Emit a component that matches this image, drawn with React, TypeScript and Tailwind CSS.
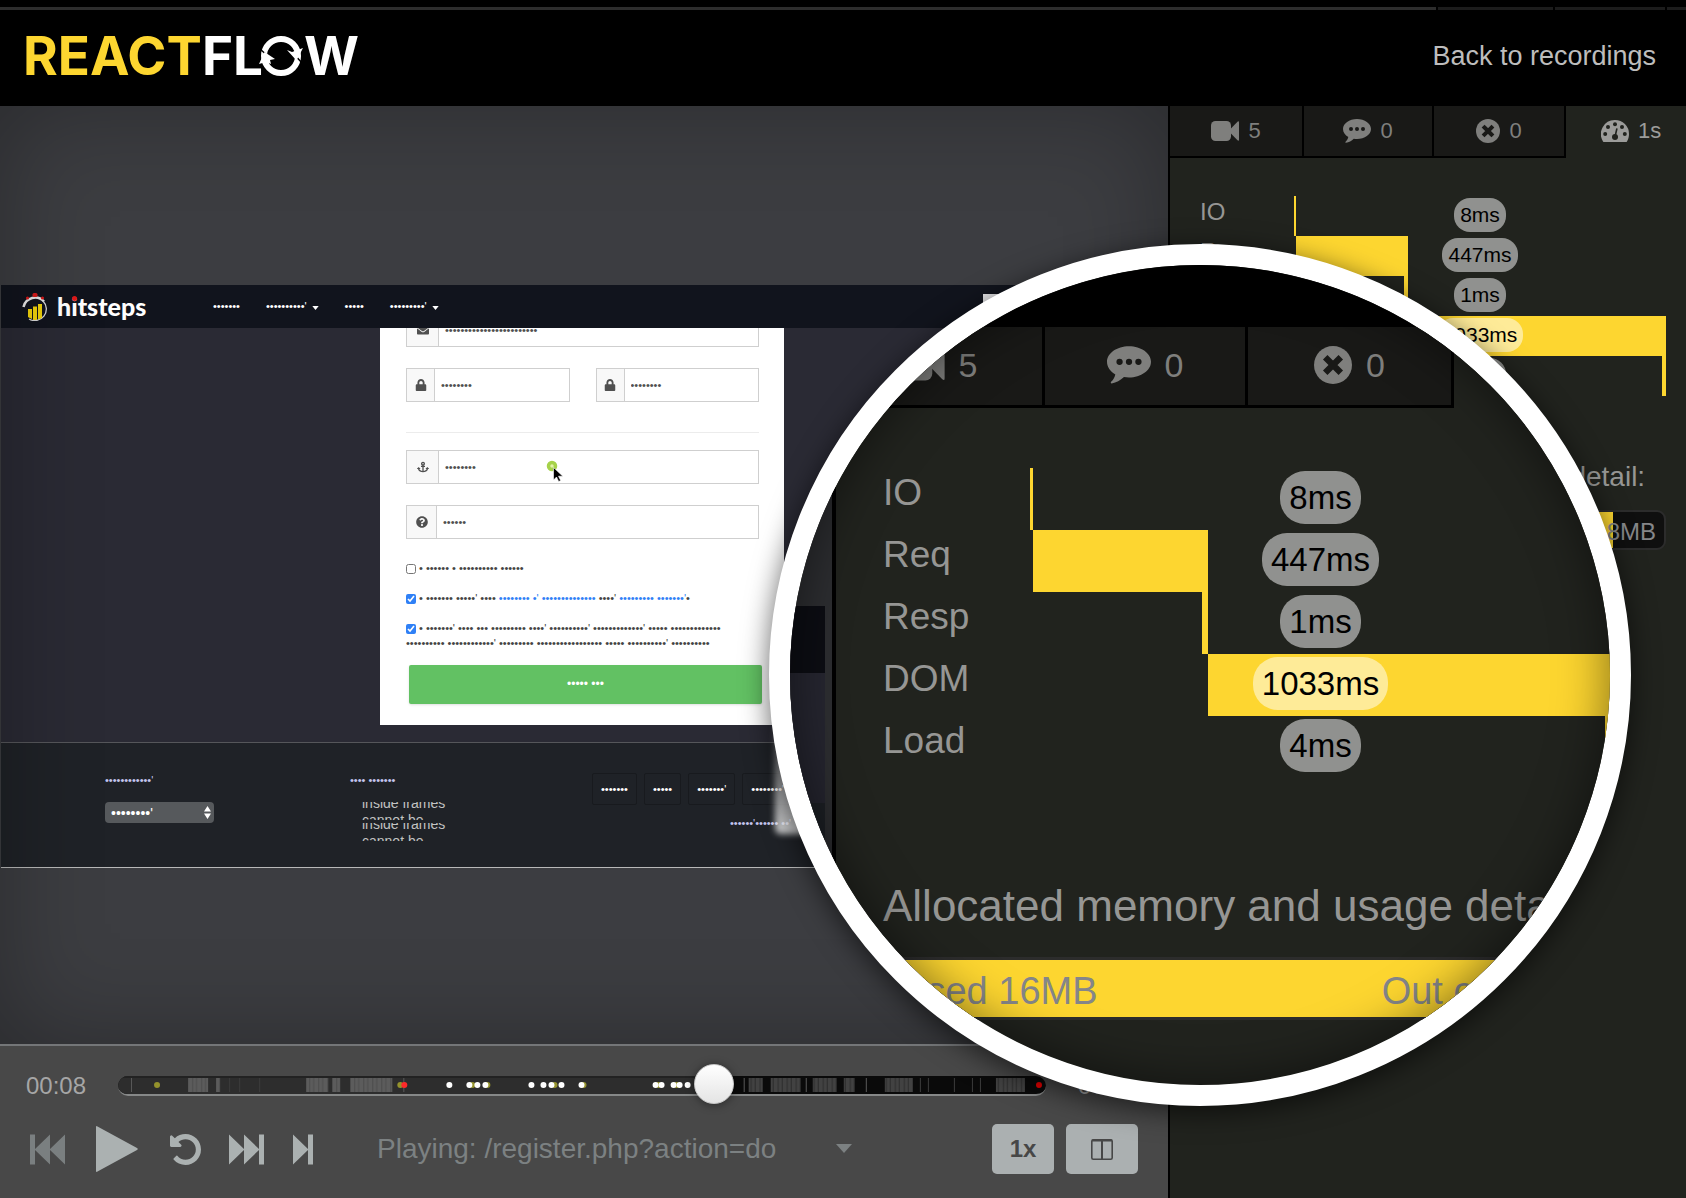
import type { ReactNode } from 'react';
import clsx from 'clsx';
import { FaAnchor, FaEnvelope, FaLock, FaQuestionCircle } from 'react-icons/fa';

const timings = [
  { label: 'IO', value: '8ms', start: 0, size: 2 },
  { label: 'Req', value: '447ms', start: 2, size: 112 },
  { label: 'Resp', value: '1ms', start: 110, size: 4 },
  { label: 'DOM', value: '1033ms', start: 114, size: 258 },
  { label: 'Load', value: '4ms', start: 368, size: 4 },
];

const timelineWidth = 372;

// busy stretches of the recording, [from, to] along the track
const playedBursts = [[70, 90], [98, 102], [188, 210], [214, 222], [232, 274]];
const upcomingBursts = [[630, 644], [652, 682], [694, 718], [725, 736], [766, 794], [877, 906]];
const ticks = [13, 285, 625, 687, 747];
const faintTicks = [111, 121, 141, 801, 809, 835, 853, 861];
const clicks = [331, 351, 359, 367, 413, 425, 433, 443, 463, 537, 543, 555, 561, 569];
const moves = [39, 282, 354, 369, 436, 465, 540, 558];

const dots = (n: number) => '•'.repeat(n);

function VideoIcon({ className }: { className: string }) {
  return (
    <svg viewBox="0 0 28 22" className={className} fill="currentColor" aria-hidden="true">
      <rect x="0" y="1" width="20" height="20" rx="4.500" />
      <path d="M17.500 11 26.500 1.700Q28 .5 28 2.500V19.500Q28 21.500 26.500 20.300Z" />
    </svg>
  );
}

function CommentIcon({ className }: { className: string }) {
  return (
    <svg viewBox="0 0 28 24" className={className} aria-hidden="true">
      <path
        fill="currentColor"
        d="M14 0C21.700 0 28 4.500 28 10s-6.300 10-14 10c-1.100 0-2.200-.1-3.200-.3-2.300 2.200-4.900 3.700-7.800 4-.6 0-.8-.6-.4-1 1.200-1.100 2.200-2.500 2.700-4.700C2.100 16.200 0 13.300 0 10 0 4.500 6.300 0 14 0Z"
      />
      <g fill="#191917">
        <circle cx="8" cy="10" r="2" />
        <circle cx="14" cy="10" r="2" />
        <circle cx="20" cy="10" r="2" />
      </g>
    </svg>
  );
}

function ErrorIcon({ className }: { className: string }) {
  return (
    <svg viewBox="0 0 24 24" className={className} aria-hidden="true">
      <circle cx="12" cy="12" r="12" fill="currentColor" />
      <path d="M8.500 8.500l7 7M15.500 8.500l-7 7" stroke="#191917" strokeWidth="4" strokeLinecap="square" />
    </svg>
  );
}

function GaugeIcon({ className }: { className: string }) {
  return (
    <svg viewBox="0 0 28 22" className={className} aria-hidden="true">
      <path fill="currentColor" d="M14 0a14 14 0 0 1 14 14c0 2.700-.7 5.200-2 7.400-.3.400-.6.600-1 .6H3c-.4 0-.7-.2-1-.6A14 14 0 0 1 14 0Z" />
      <g fill="#21231e">
        <circle cx="4.200" cy="14" r="2" />
        <circle cx="7" cy="7" r="2" />
        <circle cx="14" cy="4.200" r="2" />
        <circle cx="21" cy="7" r="2" />
        <circle cx="23.800" cy="14" r="2" />
        <circle cx="14" cy="17" r="3" />
      </g>
      <path d="M14.200 16 15.800 9" stroke="#21231e" strokeWidth="1.600" strokeLinecap="round" />
    </svg>
  );
}

function Tab({ large, active, className, children }: { large?: boolean; active?: boolean; className: string; children: ReactNode }) {
  return (
    <button
      type="button"
      className={clsx(
        'flex shrink-0 items-center border-black leading-none',
        large ? 'h-[81px] gap-[14px] pb-[2px] text-[34px]' : 'h-[52px] gap-[9px] text-[22px]',
        !active && (large ? 'border-r-3 border-b-3' : 'border-r-2 border-b-2'),
        active ? 'pb-[2px] text-[#9c9c9a]' : 'justify-center bg-[#191917] text-[#7f7f7d]',
        className,
      )}
    >
      {children}
    </button>
  );
}

function PerformancePanel({ large }: { large?: boolean }) {
  return (
    <div className={clsx('shrink-0 border-black bg-[#21231e]', large ? 'w-[840px] border-l-4' : 'w-[518px] border-l-2')}>
      <div className="flex">
        <Tab large={large} className={large ? 'w-[209px]' : 'w-[134px]'}>
          <VideoIcon className={large ? 'h-[34px] w-[44px]' : 'h-[22px] w-[28px]'} />5
        </Tab>
        <Tab large={large} className={large ? 'w-[203px]' : 'w-[130px]'}>
          <CommentIcon className={large ? 'h-[38px] w-[44px]' : 'h-[24px] w-[28px]'} />0
        </Tab>
        <Tab large={large} className={large ? 'w-[206px]' : 'w-[132px]'}>
          <ErrorIcon className={large ? 'size-[38px]' : 'size-[24px]'} />0
        </Tab>
        <Tab large={large} active className={large ? 'flex-1 pl-[55px]' : 'flex-1 pl-[35px]'}>
          <GaugeIcon className={large ? 'h-[34px] w-[44px]' : 'h-[22px] w-[28px]'} />1s
        </Tab>
      </div>

      <div className={large ? 'pt-[60px] pr-[61px] pl-[47px]' : 'pt-[38px] pr-[20px] pl-[30px]'}>
        <dl>
          {timings.map((t) => (
            <div key={t.label} className={clsx('flex', large ? 'h-[62px]' : 'h-[40px]')}>
              <dt className={clsx('flex shrink-0 items-center text-[#969694]', large ? 'w-[147px] pb-[12px] text-[37px]' : 'w-[94px] pb-[8px] text-[24px]')}>
                {t.label}
              </dt>
              <dd className="relative flex-1">
                <div
                  className="h-full bg-[#fdd630]"
                  style={{ marginLeft: `${(t.start / timelineWidth) * 100}%`, width: `${(t.size / timelineWidth) * 100}%` }}
                />
                <div className={clsx('absolute inset-0 flex justify-center', large ? 'pt-[3px]' : 'pt-[2px]')}>
                  <span
                    className={clsx(
                      'flex items-center bg-white/50 leading-none text-black',
                      large ? 'h-[53px] rounded-[25px] px-[9px] text-[33px]' : 'h-[34px] rounded-[16px] px-[6px] pb-px text-[21px]',
                    )}
                  >
                    {t.value}
                  </span>
                </div>
              </dd>
            </div>
          ))}
        </dl>

        <h2 className={clsx('whitespace-nowrap text-[#969694]', large ? 'mt-[97px] text-[44px] leading-[62px]' : 'mt-[61px] text-[28px] leading-[40px]')}>
          Allocated memory and usage detail:
        </h2>
        <div
          className={clsx(
            'relative overflow-hidden border-[#2c2c2c] bg-[#0f0f0f]',
            large ? 'mt-[20px] h-[63px] rounded-[14px] border-3' : 'mt-[13px] h-[40px] rounded-[9px] border-2',
          )}
        >
          <div className="h-full w-[89%] bg-[#fdd630]" />
          <div
            className={clsx(
              'absolute inset-0 flex items-center justify-between text-[#858689]',
              large ? 'px-[13px] pt-[6px] text-[38px]' : 'px-[8px] pt-[4px] text-[24px]',
            )}
          >
            <span>Used 16MB</span>
            <span>Out of 18MB</span>
          </div>
        </div>
      </div>
    </div>
  );
}

function Magnifier() {
  return (
    <>
      <div className="absolute top-[700px] right-[831px] h-[134px] w-[80px] rounded-md bg-linear-to-b from-white/20 to-white/80 blur-[3px]" />
      <div className="absolute top-[244px] right-[55px] size-[862px] overflow-hidden rounded-full border-21 border-white bg-[#21231e] shadow-[0_6px_28px_rgba(0,0,0,0.6)]">
        <div className="h-[62px] bg-black" />
        <div className="flex">
          <div className="flex w-[42px] shrink-0 flex-col bg-[#2c2d30] pr-[7px]">
            <div className="h-[279px]" />
            <div className="h-[67px] bg-[#0c0d13]" />
            <div className="h-[130px] bg-[#25252f]" />
            <div className="flex-1 bg-[#1d2025]" />
          </div>
          <PerformancePanel large />
        </div>
        <div className="absolute inset-0 rounded-full shadow-[inset_0_0_50px_rgba(0,0,0,0.5)]" />
      </div>
    </>
  );
}

function Logo() {
  return (
    <h1 aria-label="ReactFlow" className="flex items-center font-[Inter,sans-serif] text-[53px] leading-none font-bold">
      <span className="text-[#fdd630]">REACT</span>
      <span className="text-white">FL</span>
      <svg viewBox="0 0 46 42" className="-ml-[5px] h-[42px] w-[46px]" aria-hidden="true">
        <circle cx="23" cy="21" r="17" fill="none" stroke="#fff" strokeWidth="6" />
        <path d="M35 18 44 28M2 14l9 8" stroke="#000" strokeWidth="1.500" />
        <path d="M29 15l5 2 11-4-6.500 12.500z" fill="#fff" />
        <path d="M1 29 6.500 17 17 24l-5 1 1 4-5-2z" fill="#fff" />
      </svg>
      <span className="text-white">W</span>
    </h1>
  );
}

function Field({ label, value, icon, addon, className }: { label: string; value: string; icon: ReactNode; addon: string; className?: string }) {
  return (
    <label className={clsx('relative flex h-[34px] shrink-0 border border-[#cfcfcf] bg-white text-[#505050]', className)}>
      <span className={clsx('flex shrink-0 items-center justify-center border-r border-[#cfcfcf] bg-[#f8f8f8] text-[12px]', addon)}>{icon}</span>
      <input aria-label={label} defaultValue={value} className="w-full min-w-0 bg-transparent pl-[6px] text-[11px] outline-none" />
    </label>
  );
}

function Caret() {
  return (
    <svg viewBox="0 0 8 5" className="mt-[2px] h-[4px] w-[7px]" fill="currentColor" aria-hidden="true">
      <path d="M0 0h8L4 5z" />
    </svg>
  );
}

function HitstepsLogo() {
  return (
    <div className="flex items-center gap-[9px]">
      <svg viewBox="0 0 26 28" className="h-[28px] w-[26px]" aria-hidden="true">
        <path d="M1.500 14A12 12 0 0 1 22 8.500" fill="none" stroke="#e8e8e8" strokeWidth="2.500" />
        <path d="M21 8A11.500 11.500 0 0 1 7 26" fill="none" stroke="#d8d8d8" strokeWidth="1.300" />
        <path d="M6 16h4v10q-2.500-1-4-2zM11 13.500h4V27h-4zM16 11h4v14l-4 1.500z" fill="#f1d30b" />
        <rect x="10.500" y="0" width="5" height="4" rx="1.500" fill="#d51a1a" />
        <circle cx="5.500" cy="5" r="1.600" fill="#d51a1a" />
        <circle cx="20.500" cy="5" r="1.600" fill="#d51a1a" />
      </svg>
      <span className="relative font-[Lato,sans-serif] text-[25px] leading-none font-black text-white">
        hitsteps
        <span className="absolute top-[2px] left-[15px] size-[5px] rounded-full bg-[#e01818]" />
      </span>
    </div>
  );
}

function SignupForm() {
  return (
    <form className="mx-auto w-[404px] bg-white pr-[25px] pb-[21px] pl-[26px] text-[11px] leading-[15px] text-[#444]">
      <div className="flex h-[19px] flex-col justify-end overflow-hidden">
        <Field label="Email" value={dots(24)} icon={<FaEnvelope />} addon="w-[32px]" />
      </div>
      <div className="mt-[21px] grid grid-cols-2 gap-[26px]">
        <Field label="Password" value={dots(8)} icon={<FaLock />} addon="w-[28px]" />
        <Field label="Repeat password" value={dots(8)} icon={<FaLock />} addon="w-[28px]" />
      </div>
      <hr className="mt-[30px] border-[#ececec]" />
      <div className="relative mt-[17px]">
        <Field label="Website" value={dots(8)} icon={<FaAnchor />} addon="w-[32px]" />
        <svg viewBox="0 0 20 24" className="absolute top-[10px] left-[140px] h-[24px] w-[20px]" aria-hidden="true">
          <circle cx="6" cy="6" r="3.500" fill="#e3f2a8" stroke="#a6d24a" strokeWidth="3.500" />
          <path d="M7.500 7.500V20l3-3 2.200 4.500 2-1-2.200-4.300h4.300z" fill="#000" stroke="#fff" strokeWidth=".6" />
        </svg>
      </div>
      <Field label="Referrer" value={dots(6)} icon={<FaQuestionCircle />} addon="w-[30px]" className="mt-[21px]" />

      <label className="mt-[22px] flex items-center gap-[3px]">
        <input type="checkbox" className="size-[10px]" />
        <span>{`${dots(1)} ${dots(6)} ${dots(1)} ${dots(10)} ${dots(6)}`}</span>
      </label>
      <label className="mt-[15px] flex items-center gap-[3px]">
        <input type="checkbox" defaultChecked className="size-[10px] accent-[#2f80f6]" />
        <span>
          {`${dots(1)} ${dots(7)} ${dots(5)}' ${dots(4)} `}
          <a href="#terms" className="text-[#2f80f6]">{`${dots(8)} ${dots(1)}' ${dots(14)}`}</a>
          {` ${dots(4)}' `}
          <a href="#privacy" className="text-[#2f80f6]">{`${dots(9)} ${dots(7)}'`}</a>
          {dots(1)}
        </span>
      </label>
      <label className="mt-[15px] block whitespace-nowrap">
        <input type="checkbox" defaultChecked className="mr-[3px] inline-block size-[10px] align-middle accent-[#2f80f6]" />
        {`${dots(1)} ${dots(7)}' ${dots(4)} ${dots(3)} ${dots(9)} ${dots(4)}' ${dots(10)}' ${dots(13)}' ${dots(5)} ${dots(13)}`}
        <br />
        {`${dots(10)} ${dots(12)}' ${dots(9)} ${dots(17)} ${dots(5)} ${dots(10)}' ${dots(10)}`}
      </label>
      <button type="button" className="mt-[14px] ml-[3px] block h-[39px] w-[353px] rounded-xs bg-[#62c163] text-[12px] text-white shadow-sm">
        {`${dots(5)} ${dots(3)}`}
      </button>
    </form>
  );
}

function RecordedPage() {
  return (
    <div className="mr-[5px] ml-px border-b border-[#b8b8b8] text-[11px]">
      <nav className="flex h-[43px] items-center bg-[#11141d] text-white">
        <div className="w-[212px] pl-[21px]">
          <HitstepsLogo />
        </div>
        <div className="flex items-center gap-[26px]">
          <a href="#home">{dots(7)}</a>
          <a href="#features" className="flex items-center gap-[5px]">{dots(10)}' <Caret /></a>
          <a href="#price">{dots(5)}</a>
          <a href="#resources" className="flex items-center gap-[5px]">{dots(9)}' <Caret /></a>
        </div>
        <div className="mr-[80px] ml-auto h-[26px] w-[100px] bg-[#e8e8ea]" />
      </nav>
      <div className="bg-[#2a2a34] pb-[17px]">
        <SignupForm />
      </div>
      <footer className="flex h-[125px] border-t border-[#55565a] bg-[#1f2227] pt-[28px] pl-[104px]">
        <div className="w-[245px]">
          <h3 className="leading-[18px] text-[#c3c5ee]">{dots(12)}'</h3>
          <div className="relative mt-[13px] w-[109px]">
            <select aria-label="Language" className="h-[21px] w-full appearance-none rounded-sm bg-[#56595c] pl-[6px] text-[14px] leading-none text-white">
              <option>{dots(8)}'</option>
            </select>
            <svg viewBox="0 0 7 13" className="absolute top-[4px] right-[3px] h-[13px] w-[7px]" fill="#fff" aria-hidden="true">
              <path d="M3.500 0 7 5.500H0zM3.500 13 0 7.500h7z" />
            </svg>
          </div>
        </div>
        <div className="w-[242px]">
          <h3 className="leading-[18px] text-[#c3c5ee]">{`${dots(4)} ${dots(7)}`}</h3>
          <div className="mt-[13px] ml-[12px] flex w-[92px] flex-col gap-[3px] text-[14px] leading-[17px] text-[#c2c2c2]">
            <div className="h-[18px] overflow-hidden">
              <p className="-mt-[7px]">inside frames cannot be</p>
            </div>
            <div className="h-[18px] overflow-hidden">
              <p className="-mt-[7px]">inside frames cannot be</p>
            </div>
          </div>
        </div>
        <div className="w-[250px] text-white">
          <div className="mt-[2px] flex gap-[7px]">
            {[`${dots(7)}`, `${dots(5)}`, `${dots(7)}'`, `${dots(8)}'`].map((item) => (
              <a key={item} href="#link" className="flex h-[32px] items-center rounded-xs border border-[#181a1e] px-[8px]">{item}</a>
            ))}
          </div>
          <p className="mt-[10px] pl-[138px] whitespace-nowrap text-[#c3c5ee]">{`${dots(6)}'${dots(6)} ${dots(2)}'`}</p>
        </div>
      </footer>
    </div>
  );
}

function Timeline() {
  return (
    <div className="relative h-[20px] flex-1">
      <div className="h-full overflow-hidden rounded-full border-b-2 border-[#868888] bg-[#0a0a0a]">
        <svg viewBox="0 0 927 18" preserveAspectRatio="none" className="h-full w-full" aria-hidden="true">
          <defs>
            <pattern id="played" width="9" height="14" patternUnits="userSpaceOnUse">
              <rect width="9" height="14" fill="#5c5c5c" />
              <path d="M2.500 0v14M6.500 0v14" stroke="#4c4c4c" />
            </pattern>
            <pattern id="upcoming" width="9" height="14" patternUnits="userSpaceOnUse">
              <rect width="9" height="14" fill="#424242" />
              <path d="M2.500 0v14M6.500 0v14" stroke="#2c2c2c" />
            </pattern>
          </defs>
          <rect width="596" height="18" fill="#2d2d2d" />
          <rect width="596" height="2" fill="#222" />
          {playedBursts.map(([from, to]) => (
            <rect key={from} x={from} y="2" width={to - from} height="14" fill="url(#played)" />
          ))}
          {upcomingBursts.map(([from, to]) => (
            <rect key={from} x={from} y="2" width={to - from} height="14" fill="url(#upcoming)" />
          ))}
          {ticks.map((x) => (
            <rect key={x} x={x} y="2" width="1" height="14" fill="#5a5a5a" />
          ))}
          {faintTicks.map((x) => (
            <rect key={x} x={x} y="2" width="1" height="14" fill="#3c3c3c" />
          ))}
          {moves.map((x) => (
            <circle key={x} cx={x} cy="9" r="3" fill="#94922c" />
          ))}
          {clicks.map((x) => (
            <circle key={x} cx={x} cy="9" r="3" fill="#fff" />
          ))}
          <circle cx="286" cy="9" r="3" fill="#ff2a2a" />
          <circle cx="920" cy="9" r="3" fill="#e60000" />
        </svg>
      </div>
      <input
        type="range"
        aria-label="Seek"
        min={0}
        max={1000}
        defaultValue={649}
        className="absolute inset-x-0 -top-[12px] m-0 h-[40px] w-full appearance-none bg-transparent [&::-webkit-slider-thumb]:size-[40px] [&::-webkit-slider-thumb]:appearance-none [&::-webkit-slider-thumb]:rounded-full [&::-webkit-slider-thumb]:border [&::-webkit-slider-thumb]:border-[#c8c8c8] [&::-webkit-slider-thumb]:bg-linear-to-b [&::-webkit-slider-thumb]:from-white [&::-webkit-slider-thumb]:to-[#e4e4e4] [&::-webkit-slider-thumb]:shadow-[0_1px_10px_rgba(0,0,0,0.4)]"
      />
    </div>
  );
}

function Controls() {
  return (
    <div className="h-[154px] border-t-2 border-[#747678] bg-[#484848] text-[#abb1b1]">
      <div className="flex items-center pt-[30px] text-[24px] leading-[20px] text-[#a6a6a6]">
        <span className="w-[118px] pl-[26px]">00:08</span>
        <Timeline />
        <span className="w-[122px] pl-[32px]">00:13</span>
      </div>
      <div className="mt-[28px] flex h-[50px] items-center pr-[30px] pl-[30px]">
        <button type="button" aria-label="Previous recording" className="text-[#7a7f80]">
          <svg viewBox="0 0 35 31" className="h-[31px] w-[35px]" fill="currentColor" aria-hidden="true">
            <path d="M0 .5h5V15L20 .5V15L35 .5v30L20 16v14.500L5 16v14.500H0z" />
          </svg>
        </button>
        <button type="button" aria-label="Play" className="ml-[31px]">
          <svg viewBox="0 0 42 46" className="h-[46px] w-[42px]" fill="currentColor" aria-hidden="true">
            <path d="M0 1Q0-.5 1.500.5L41 22q1.500 1 0 2L1.500 45.500Q0 46.500 0 45z" />
          </svg>
        </button>
        <button type="button" aria-label="Replay" className="ml-[32px]">
          <svg viewBox="128 128 1536 1536" className="size-[31px]" fill="currentColor" aria-hidden="true">
            <path d="M1664 896q0 156-61 298t-164 245-245 164-298 61q-172 0-327-72.500t-264-204.500q-7-10-6.500-22.500t8.500-20.500l137-138q10-9 25-9 16 2 23 12 73 95 179 147t225 52q104 0 198.500-40.500t163.500-109.500 109.500-163.500 40.500-198.500-40.500-198.500-109.500-163.500-163.500-109.500-198.500-40.500q-98 0-188 35.500t-160 101.500l137 138q31 30 14 69-17 40-59 40h-448q-26 0-45-19t-19-45v-448q0-42 40-59 39-17 69 14l130 129q107-101 244.500-156.500t284.500-55.500q156 0 298 61t245 164 164 245 61 298z" />
          </svg>
        </button>
        <button type="button" aria-label="Next recording" className="ml-[28px]">
          <svg viewBox="0 0 35 31" className="h-[31px] w-[35px]" fill="currentColor" aria-hidden="true">
            <path d="M35 .5h-5V15L15 .5V15L0 .5v30L15 16v14.500L30 16v14.500h5z" />
          </svg>
        </button>
        <button type="button" aria-label="Next page" className="ml-[29px]">
          <svg viewBox="0 0 20 31" className="h-[31px] w-[20px]" fill="currentColor" aria-hidden="true">
            <path d="M20 .5h-5V15L0 .5v30L15 16v14.500h5z" />
          </svg>
        </button>
        <div className="relative ml-[64px] w-[475px] text-[#7c8182]">
          <select aria-label="Page" className="w-full appearance-none bg-transparent text-[28px] leading-[36px]">
            <option>Playing: /register.php?action=do</option>
          </select>
          <svg viewBox="0 0 16 9" className="absolute top-[13px] right-0 h-[9px] w-[16px]" fill="currentColor" aria-hidden="true">
            <path d="M0 0h16L8 9z" />
          </svg>
        </div>
        <button type="button" className="ml-auto h-[50px] w-[62px] rounded-[5px] bg-[#abb0b1] text-[24px] font-bold text-[#474747]">1x</button>
        <button type="button" aria-label="Toggle layout" className="ml-[12px] flex h-[50px] w-[72px] items-center justify-center rounded-[5px] bg-[#abb0b1]">
          <svg viewBox="0 0 22 21" className="h-[21px] w-[22px]" fill="none" stroke="#474747" aria-hidden="true">
            <rect x=".8" y=".8" width="20.400" height="19.400" rx="1.500" strokeWidth="1.600" />
            <path d="M1 1.500h20M11 2v18" strokeWidth="2" />
          </svg>
        </button>
      </div>
    </div>
  );
}

export default function App() {
  return (
    <div className="relative flex min-h-screen flex-col overflow-hidden bg-black font-['Liberation_Sans',Arial,sans-serif]">
      <div className="mt-[7px] flex h-[3px] gap-[2px]">
        <div className="flex-1 bg-[#2d2d2d]" />
        <div className="w-[115px] bg-[#1c1c1c]" />
        <div className="w-[110px] bg-[#1c1c1c]" />
        <div className="w-[19px] bg-[#1c1c1c]" />
      </div>
      <header className="flex h-[96px] items-center justify-between pr-[30px] pb-[4px] pl-[23px]">
        <Logo />
        <a href="#recordings" className="text-[27px] text-[#bdbdbd]">Back to recordings</a>
      </header>
      <main className="flex flex-1">
        <div className="flex min-w-0 flex-1 flex-col">
          <section className="relative flex flex-1 flex-col justify-center bg-[#3c3d41] pt-[3px]">
            <RecordedPage />
            <div className="pointer-events-none absolute inset-0 shadow-[inset_0_0_100px_rgba(0,0,0,0.3)]" />
          </section>
          <Controls />
        </div>
        <PerformancePanel />
      </main>
      <Magnifier />
    </div>
  );
}
